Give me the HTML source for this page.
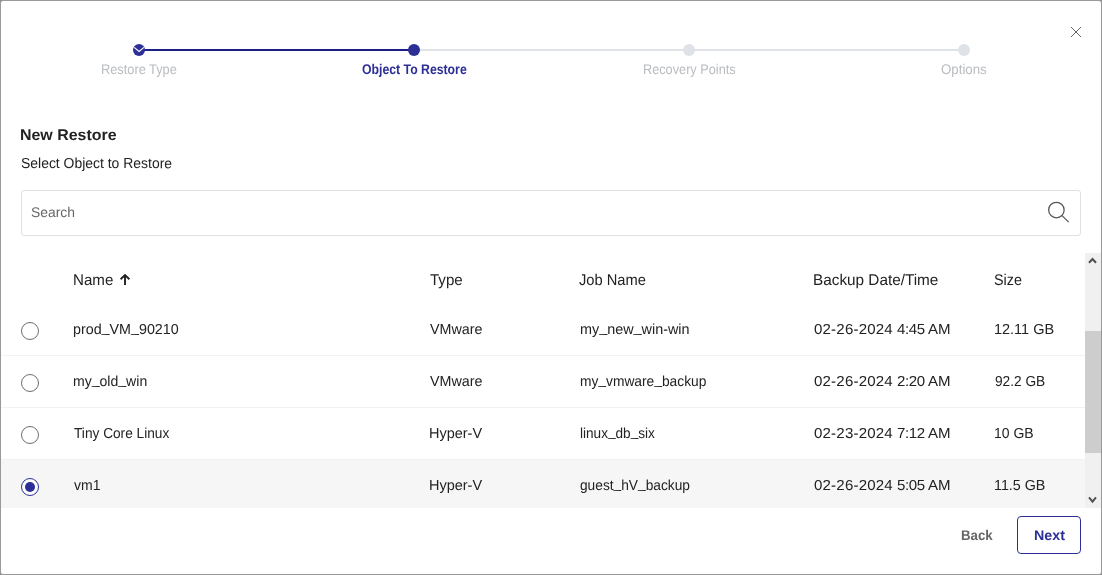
<!DOCTYPE html>
<html>
<head>
<meta charset="utf-8">
<title>New Restore</title>
<style>
html,body{margin:0;padding:0;}
body{width:1102px;height:575px;overflow:hidden;background:#8c8c8c;font-family:"Liberation Sans",sans-serif;color:#222;position:relative;}
.dlg{position:absolute;left:0;top:0;width:1100px;height:573px;border:1px solid #999;border-radius:3px;background:#fff;}
.abs{position:absolute;}
.t{position:absolute;white-space:nowrap;line-height:18px;transform-origin:0 0;}
.u{position:relative;top:-2px;}
.line{position:absolute;height:2px;top:49px;}
.dot{position:absolute;width:12px;height:12px;border-radius:50%;top:44px;}
.search{position:absolute;left:21px;top:190px;width:1058px;height:44px;border:1px solid #e0e0e0;border-radius:3px;}
.sep{position:absolute;left:1px;width:1084px;height:1px;background:#f2f2f2;}
.selrow{position:absolute;left:1px;top:459px;width:1084px;height:49px;background:#f6f6f6;}
.radio{position:absolute;left:21px;width:16px;height:16px;border:1px solid #6e6e6e;border-radius:50%;background:#fff;}
.radio.on{border-color:#2c2f96;}
.radio.on:after{content:"";position:absolute;left:3px;top:3px;width:10px;height:10px;border-radius:50%;background:#2c2f96;}
.sb{position:absolute;left:1085px;top:253px;width:16px;height:255px;background:#f0f0f0;}
.thumb{position:absolute;left:0;top:78px;width:16px;height:122px;background:#cdcdcd;}
.next{position:absolute;left:1017px;top:516px;width:62px;height:36px;border:1px solid #2c2f96;border-radius:4px;}
</style>
</head>
<body>
<div class="dlg"></div>

<div class="line" style="left:139px;width:275px;background:#1c1e8c;"></div>
<div class="line" style="left:414px;width:550px;background:#dfe2e6;"></div>
<div class="dot" style="left:133px;background:#2c2f96;">
<svg width="12" height="12" viewBox="0 0 12 12" style="position:absolute;left:0;top:0"><path d="M1.2 3.35 L6.05 7.45 L10.9 3.35" fill="none" stroke="#fff" stroke-width="1.15"/></svg>
</div>
<div class="dot" style="left:408px;background:#2c2f96;"></div>
<div class="dot" style="left:683px;background:#dfe2e6;"></div>
<div class="dot" style="left:958px;background:#dfe2e6;"></div>

<svg class="abs" style="left:1070px;top:26px" width="12" height="12" viewBox="0 0 12 12"><path d="M1 1 L11 11 M11 1 L1 11" stroke="#555" stroke-width="0.9" fill="none"/></svg>

<div class="search"></div>
<svg class="abs" style="left:1045px;top:199px" width="26" height="26" viewBox="0 0 26 26"><circle cx="11.4" cy="11" r="7.75" fill="none" stroke="#555" stroke-width="1.25"/><path d="M17 16.6 L23.7 23.1" stroke="#555" stroke-width="1.25" fill="none"/></svg>

<svg class="abs" style="left:119px;top:273px" width="12" height="13" viewBox="0 0 12 13"><path d="M6 12 L6 2.4 M1.6 6.2 L6 2 L10.4 6.2" fill="none" stroke="#222" stroke-width="1.9"/></svg>

<div class="selrow"></div>
<div class="sep" style="top:355px"></div>
<div class="sep" style="top:407px"></div>
<div class="sep" style="top:459px"></div>
<div class="radio" style="top:322px"></div>
<div class="radio" style="top:374px"></div>
<div class="radio" style="top:426px"></div>
<div class="radio on" style="top:478px"></div>

<div class="sb">
  <div class="thumb"></div>
  <svg style="position:absolute;left:0;top:0" width="16" height="255" viewBox="0 0 16 255"><path d="M4 9.8 L7.5 6 L11 9.8 M4 244.4 L7.5 248.6 L11 244.4" fill="none" stroke="#505050" stroke-width="2"/></svg>
</div>

<div class="next"></div>
<div id="txt" style="position:absolute;left:0;top:0;width:1102px;height:575px;will-change:transform;">
<nav class="steps">
<div class="t" id="s1" style="left:101.00px;top:60.00px;font-size:14px;color:#b9bcc0;transform:scaleX(0.9135) rotate(0.05deg);">Restore Type</div>
<div class="t" id="s2" style="left:362.00px;top:60.00px;font-size:14px;font-weight:bold;color:#2c2f96;transform:scaleX(0.8760) rotate(0.05deg);">Object To Restore</div>
<div class="t" id="s3" style="left:643.00px;top:60.00px;font-size:14px;color:#b9bcc0;transform:scaleX(0.9088) rotate(0.05deg);">Recovery Points</div>
<div class="t" id="s4" style="left:941.00px;top:60.00px;font-size:14px;color:#b9bcc0;transform:scaleX(0.9478) rotate(0.05deg);">Options</div>
</nav>
<header class="heading">
<div class="t" id="title" style="left:20.00px;top:126.00px;font-size:15.5px;font-weight:bold;color:#222;transform:scaleX(1.0288) rotate(0.05deg);">New Restore</div>
<div class="t" id="sub" style="left:21.00px;top:154.00px;font-size:14.5px;color:#222;transform:scaleX(0.9611) rotate(0.05deg);">Select Object to Restore</div>
</header>
<div class="searchbox">
<div class="t" id="search" style="left:31.00px;top:203.00px;font-size:14px;color:#666;transform:scaleX(0.9929) rotate(0.05deg);">Search</div>
</div>
<div class="grid" role="table">
<div class="thead" role="row">
<div class="t" id="h1" style="left:73.00px;top:271.00px;font-size:15.5px;color:#222;transform:scaleX(0.9749) rotate(0.05deg);">Name</div>
<div class="t" id="h2" style="left:430.00px;top:271.00px;font-size:15.5px;color:#222;transform:scaleX(0.9726) rotate(0.05deg);">Type</div>
<div class="t" id="h3" style="left:579.00px;top:271.00px;font-size:15.5px;color:#222;transform:scaleX(0.9473) rotate(0.05deg);">Job Name</div>
<div class="t" id="h4" style="left:813.00px;top:271.00px;font-size:15.5px;color:#222;transform:scaleX(0.9880) rotate(0.05deg);">Backup Date/Time</div>
<div class="t" id="h5" style="left:994.00px;top:271.00px;font-size:15.5px;color:#222;transform:scaleX(0.9257) rotate(0.05deg);">Size</div>
</div>
<div class="tr" role="row">
<div class="t" id="r0n" style="left:73.00px;top:320.00px;font-size:14.5px;color:#222;transform:scaleX(0.9856) rotate(0.05deg);">prod<span class="u">_</span>VM<span class="u">_</span>90210</div>
<div class="t" id="r0t" style="left:430.00px;top:320.00px;font-size:14.5px;color:#222;transform:scaleX(0.9865) rotate(0.05deg);">VMware</div>
<div class="t" id="r0j" style="left:580.00px;top:320.00px;font-size:14.5px;color:#222;transform:scaleX(0.9918) rotate(0.05deg);">my<span class="u">_</span>new<span class="u">_</span>win-win</div>
<div class="t" id="r0d" style="left:814.00px;top:320.00px;font-size:14.5px;color:#222;transform:scaleX(1.0378) rotate(0.05deg);"><span style="letter-spacing:0.19px">02-26-2024</span> <span style="letter-spacing:-0.45px">4:45</span> AM</div>
<div class="t" id="r0s" style="left:994.00px;top:320.00px;font-size:14.5px;color:#222;transform:scaleX(0.9988) rotate(0.05deg);">12.11 GB</div>
</div>
<div class="tr" role="row">
<div class="t" id="r1n" style="left:73.00px;top:372.00px;font-size:14.5px;color:#222;transform:scaleX(0.9685) rotate(0.05deg);">my<span class="u">_</span>old<span class="u">_</span>win</div>
<div class="t" id="r1t" style="left:430.00px;top:372.00px;font-size:14.5px;color:#222;transform:scaleX(0.9865) rotate(0.05deg);">VMware</div>
<div class="t" id="r1j" style="left:580.00px;top:372.00px;font-size:14.5px;color:#222;transform:scaleX(0.9500) rotate(0.05deg);">my<span class="u">_</span>vmware<span class="u">_</span>backup</div>
<div class="t" id="r1d" style="left:814.00px;top:372.00px;font-size:14.5px;color:#222;transform:scaleX(1.0378) rotate(0.05deg);"><span style="letter-spacing:0.19px">02-26-2024</span> <span style="letter-spacing:-0.45px">2:20</span> AM</div>
<div class="t" id="r1s" style="left:995.00px;top:372.00px;font-size:14.5px;color:#222;transform:scaleX(0.9445) rotate(0.05deg);">92.2 GB</div>
</div>
<div class="tr" role="row">
<div class="t" id="r2n" style="left:74.00px;top:424.00px;font-size:14.5px;color:#222;transform:scaleX(0.9435) rotate(0.05deg);">Tiny Core Linux</div>
<div class="t" id="r2t" style="left:429.00px;top:424.00px;font-size:14.5px;color:#222;transform:scaleX(0.9984) rotate(0.05deg);">Hyper-V</div>
<div class="t" id="r2j" style="left:580.00px;top:424.00px;font-size:14.5px;color:#222;transform:scaleX(0.9374) rotate(0.05deg);">linux<span class="u">_</span>db<span class="u">_</span>six</div>
<div class="t" id="r2d" style="left:814.00px;top:424.00px;font-size:14.5px;color:#222;transform:scaleX(1.0378) rotate(0.05deg);"><span style="letter-spacing:0.19px">02-23-2024</span> <span style="letter-spacing:-0.45px">7:12</span> AM</div>
<div class="t" id="r2s" style="left:994.00px;top:424.00px;font-size:14.5px;color:#222;transform:scaleX(0.9646) rotate(0.05deg);">10 GB</div>
</div>
<div class="tr selected" role="row">
<div class="t" id="r3n" style="left:74.00px;top:476.00px;font-size:14.5px;color:#222;transform:scaleX(0.9679) rotate(0.05deg);">vm1</div>
<div class="t" id="r3t" style="left:429.00px;top:476.00px;font-size:14.5px;color:#222;transform:scaleX(0.9984) rotate(0.05deg);">Hyper-V</div>
<div class="t" id="r3j" style="left:580.00px;top:476.00px;font-size:14.5px;color:#222;transform:scaleX(0.9464) rotate(0.05deg);">guest<span class="u">_</span>hV<span class="u">_</span>backup</div>
<div class="t" id="r3d" style="left:814.00px;top:476.00px;font-size:14.5px;color:#222;transform:scaleX(1.0378) rotate(0.05deg);"><span style="letter-spacing:0.19px">02-26-2024</span> <span style="letter-spacing:-0.45px">5:05</span> AM</div>
<div class="t" id="r3s" style="left:994.00px;top:476.00px;font-size:14.5px;color:#222;transform:scaleX(0.9866) rotate(0.05deg);">11.5 GB</div>
</div>
</div>
<footer class="actions">
<div class="t" id="back" style="left:961.00px;top:526.00px;font-size:14px;font-weight:bold;color:#666;transform:scaleX(0.9446) rotate(0.05deg);">Back</div>
<div class="t" id="next" style="left:1034.00px;top:526.00px;font-size:14px;font-weight:bold;color:#2c2f96;transform:scaleX(1.0178) rotate(0.05deg);">Next</div>
</footer>
</div>
</body>
</html>
